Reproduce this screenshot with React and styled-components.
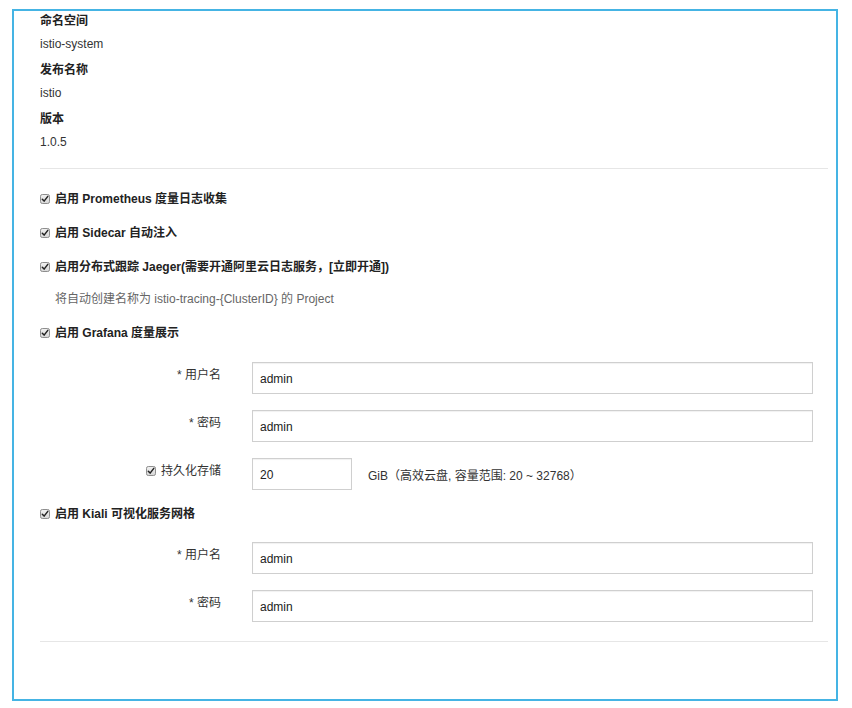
import React from "react";
import styled, { createGlobalStyle } from "styled-components";

const Global = createGlobalStyle`
  html, body { margin: 0; padding: 0; background: #fff; }
  body {
    font-family: "Liberation Sans", "Noto Sans CJK SC", sans-serif;
    font-size: 12px;
    color: #333;
  }
`;

const Frame = styled.div`
  box-sizing: border-box;
  margin: 9px 14px 0 12px;
  height: 692px;
  border: 2px solid #45b4e4;
  padding: 0 8px 0 26px;
`;

const InfoLabel = styled.div`
  font-weight: bold;
  line-height: 20px;
  margin-top: ${(p) => p.$mt || 0}px;
  color: #222;
`;

const InfoValue = styled.div`
  line-height: 20px;
  margin-top: 3px;
  color: #333;
`;

const Divider = styled.div`
  height: 1px;
  background: #e6e6e6;
  margin-top: ${(p) => p.$mt}px;
`;

const CheckRow = styled.label`
  display: flex;
  align-items: center;
  gap: 5px;
  line-height: 20px;
  height: 20px;
  margin-top: ${(p) => p.$mt}px;
  font-weight: ${(p) => (p.$bold ? "bold" : "normal")};
  color: #222;
`;

const Desc = styled.div`
  line-height: 20px;
  margin-top: 12px;
  padding-left: 15px;
  color: #666;
`;

const FormRow = styled.div`
  display: grid;
  grid-template-columns: 181px 1fr;
  column-gap: 31px;
  align-items: start;
  margin-top: ${(p) => p.$mt}px;
  padding-right: 15px;
`;

const FieldLabel = styled.div`
  display: flex;
  justify-content: flex-end;
  align-items: center;
  gap: 5px;
  padding-top: 5px;
  line-height: 16px;
  color: #333;
`;

const FieldBody = styled.div`
  display: flex;
  align-items: center;
  gap: 16px;
`;

const Input = styled.div`
  box-sizing: border-box;
  height: 32px;
  width: ${(p) => (p.$w ? `${p.$w}px` : "100%")};
  border: 1px solid #cfcfcf;
  box-shadow: inset 0 1px 1px rgba(0, 0, 0, 0.06);
  padding: 8px 7px 0;
  line-height: 16px;
  font-size: 12px;
  color: #222;
`;

const Hint = styled.span`
  color: #333;
`;

const BoxSvg = styled.svg`
  flex: none;
  display: block;
`;

function Check() {
  return (
    <BoxSvg width="10" height="10" viewBox="0 0 10 10">
      <defs>
        <linearGradient id="cbg" x1="0" y1="0" x2="0" y2="1">
          <stop offset="0" stopColor="#f2f2f2" />
          <stop offset="1" stopColor="#d6d6d6" />
        </linearGradient>
      </defs>
      <rect x="0.5" y="0.5" width="9" height="9" rx="1.8" fill="url(#cbg)" stroke="#8e8e8e" />
      <path d="M2.3 5.2 L4.1 7.1 L7.8 2.4" fill="none" stroke="#222" strokeWidth="1.5" strokeLinecap="round" strokeLinejoin="round" />
    </BoxSvg>
  );
}

export default function App() {
  return (
    <>
      <Global />
      <Frame>
        <InfoLabel>命名空间</InfoLabel>
        <InfoValue>istio-system</InfoValue>
        <InfoLabel $mt={6}>发布名称</InfoLabel>
        <InfoValue>istio</InfoValue>
        <InfoLabel $mt={6}>版本</InfoLabel>
        <InfoValue>1.0.5</InfoValue>
        <Divider $mt={16} />

        <CheckRow $bold $mt={20}>
          <Check />
          启用 Prometheus 度量日志收集
        </CheckRow>
        <CheckRow $bold $mt={14}>
          <Check />
          启用 Sidecar 自动注入
        </CheckRow>
        <CheckRow $bold $mt={14}>
          <Check />
          启用分布式跟踪 Jaeger(需要开通阿里云日志服务，[立即开通])
        </CheckRow>
        <Desc>将自动创建名称为 istio-tracing-{"{ClusterID}"} 的 Project</Desc>
        <CheckRow $bold $mt={14}>
          <Check />
          启用 Grafana 度量展示
        </CheckRow>

        <FormRow $mt={19}>
          <FieldLabel>* 用户名</FieldLabel>
          <FieldBody>
            <Input>admin</Input>
          </FieldBody>
        </FormRow>
        <FormRow $mt={16}>
          <FieldLabel>* 密码</FieldLabel>
          <FieldBody>
            <Input>admin</Input>
          </FieldBody>
        </FormRow>
        <FormRow $mt={16}>
          <FieldLabel>
            <Check />
            持久化存储
          </FieldLabel>
          <FieldBody>
            <Input $w={100}>20</Input>
            <Hint>GiB（高效云盘, 容量范围: 20 ~ 32768）</Hint>
          </FieldBody>
        </FormRow>

        <CheckRow $bold $mt={14}>
          <Check />
          启用 Kiali 可视化服务网格
        </CheckRow>
        <FormRow $mt={18}>
          <FieldLabel>* 用户名</FieldLabel>
          <FieldBody>
            <Input>admin</Input>
          </FieldBody>
        </FormRow>
        <FormRow $mt={16}>
          <FieldLabel>* 密码</FieldLabel>
          <FieldBody>
            <Input>admin</Input>
          </FieldBody>
        </FormRow>
        <Divider $mt={19} />
      </Frame>
    </>
  );
}
